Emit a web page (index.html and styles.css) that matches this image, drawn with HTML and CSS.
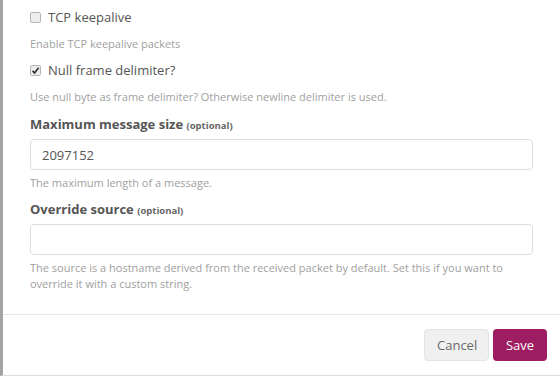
FILE: index.html
```html
<!DOCTYPE html>
<html lang="en">
<head>
  <meta charset="UTF-8" />
  <title>Input settings</title>
  <link rel="stylesheet" href="styles.css">
</head>
<body>
  <div class="modal">
    <div class="modal-body">
      <label class="check">
        <span class="box"></span>
        TCP keepalive
      </label>
      <p class="help">Enable TCP keepalive packets</p>

      <label class="check check-second">
        <span class="box">
          <svg width="9" height="9" viewBox="0 0 9 9"><path d="M1.5 4.8 L3.6 6.9 L7.6 1.8" fill="none" stroke="#333" stroke-width="1.7"/></svg>
        </span>
        Null frame delimiter?
      </label>
      <p class="help">Use null byte as frame delimiter? Otherwise newline delimiter is used.</p>

      <div class="field">
        <label class="field-label">Maximum message size <small>(optional)</small></label>
        <input type="text" class="text-input" value="2097152" />
        <p class="help">The maximum length of a message.</p>
      </div>

      <div class="field">
        <label class="field-label">Override source <small>(optional)</small></label>
        <input type="text" class="text-input" value="" />
        <p class="help">The source is a hostname derived from the received packet by default. Set this if you want to override it with a custom string.</p>
      </div>
    </div>

    <div class="modal-footer">
      <button class="btn btn-cancel">Cancel</button>
      <button class="btn btn-save">Save</button>
    </div>
  </div>
</body>
</html>
```

FILE: styles.css
```css
body {
  margin: 0;
  padding: 0;
  background: #ffffff;
  font-family: "Open Sans", sans-serif;
  color: #555555;
}

.modal {
  border-left: 3px solid #a3a3a3;
  border-bottom: 1px solid #dcdcdc;
  box-sizing: border-box;
  height: 376px;
}

.modal-body {
  padding: 7px 27px 22px 27px;
  border-bottom: 1px solid #e5e5e5;
}

.check {
  display: flex;
  align-items: center;
  gap: 7px;
  font-size: 13px;
  line-height: 20px;
  color: #555555;
}

.check-second {
  margin-top: 8px;
}

.box {
  width: 9px;
  height: 9px;
  border: 1px solid #b5b5b5;
  border-radius: 2px;
  background: #ededed;
  display: flex;
  align-items: center;
  justify-content: center;
}

.help {
  margin: 9px 0 0 0;
  font-size: 11px;
  line-height: 16px;
  color: #a0a0a0;
}

.field {
  margin-top: 10px;
}

.field + .field {
  margin-top: 9px;
}

.field-label {
  display: block;
  font-size: 13px;
  font-weight: 700;
  line-height: 18px;
  color: #555555;
  margin-bottom: 4px;
}

.field-label small {
  font-size: 9.5px;
  font-weight: 700;
  color: #666666;
}

.text-input {
  display: block;
  box-sizing: border-box;
  width: 100%;
  height: 31px;
  padding: 0 11px;
  border: 1px solid #dddddd;
  border-radius: 4px;
  font-family: "Open Sans", sans-serif;
  font-size: 13px;
  color: #555555;
  outline: none;
}

.field .help {
  margin-top: 5px;
}

.modal-footer {
  display: flex;
  justify-content: flex-end;
  gap: 4px;
  padding: 14px 13px 0 0;
}

.btn {
  height: 32px;
  border: none;
  border-radius: 4px;
  font-family: "Open Sans", sans-serif;
  font-size: 13px;
  padding: 0 12px;
  cursor: pointer;
}

.btn-cancel {
  width: 65px;
  background: #f0f0f0;
  border: 1px solid #e4e4e4;
  color: #6a6a6a;
}

.btn-save {
  width: 54px;
  background: #9e1c61;
  color: #ffffff;
}
```
